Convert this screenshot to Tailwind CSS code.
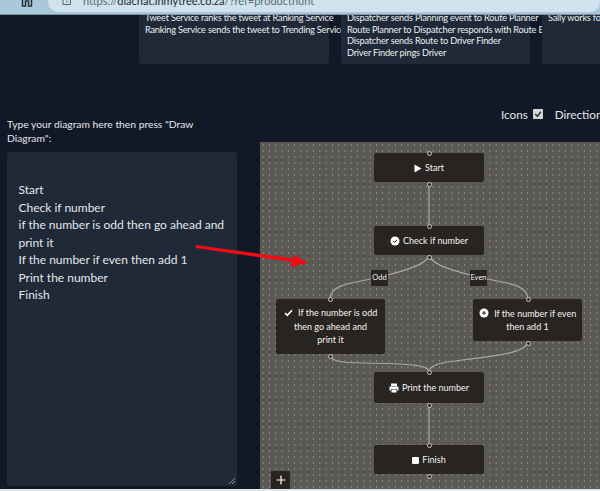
<!DOCTYPE html>
<html><head><meta charset="utf-8"><script src="https://cdn.jsdelivr.net/npm/@tailwindcss/browser@4"></script></head>
<body class="m-0 bg-[#111827]">
<div class="relative w-[600px] h-[491px] overflow-hidden flex flex-col bg-[#111827] text-[#e5e7eb] font-['Lato','Roboto',sans-serif] text-[12px]">
  <div class="h-[15px] shrink-0 bg-[#a9c8da] relative border-b border-[#7f929e]">
    <svg class="absolute left-[21px] top-0" width="12" height="7" viewBox="0 0 12 7" fill="none" stroke="#26323a" stroke-width="1.5"><path d="M1.5 0V6H4.5V1H7.5V6H10.500V0"/></svg>
    <div class="absolute left-[48px] top-[-10px] w-[552px] h-[22px] bg-[#cfe2ee] rounded-[10px]"></div>
    <div class="absolute left-[62px] top-0 flex items-start">
      <svg class="mt-[-2px]" width="10" height="8" viewBox="0 0 10 8" fill="none" stroke="#55636d"><path d="M1 0V6.500H8.500V0M5 2.500V4.500"/></svg>
      <span class="ml-[11px] mt-[-6px] text-[11px] leading-[14px] text-[#5c6a73] whitespace-nowrap">https://<span class="text-[#1c262d]">diachat.inmytree.co.za</span>/?ref=producthunt</span>
    </div>
  </div>
  <div class="h-[49px] shrink-0 flex gap-[12px] pl-[139px] overflow-hidden leading-[11.7px] text-[9.200px] tracking-[-0.2px] text-[#eceef1] whitespace-nowrap">
    <div class="w-[190px] shrink-0 h-[49px] bg-[#1f2937] rounded-b-[3px] pl-[6px] relative">
      <div class="-mt-[3px]"><div>Tweet Service ranks the tweet at Ranking Service</div><div>Ranking Service sends the tweet to Trending Service</div></div>
    </div>
    <div class="w-[189px] shrink-0 h-[49px] bg-[#1f2937] rounded-b-[3px] pl-[6px] relative">
      <div class="-mt-[3px]"><div>Dispatcher sends Planning event to Route Planner</div><div>Route Planner to Dispatcher responds with Route Engine</div><div>Dispatcher sends Route to Driver Finder</div><div>Driver Finder pings Driver</div></div>
    </div>
    <div class="w-[190px] shrink-0 h-[49px] bg-[#1f2937] rounded-b-[3px] pl-[6px] relative">
      <div class="-mt-[3px]"><div>Sally works for a big company</div></div>
    </div>
  </div>
  <div class="h-[78px] shrink-0 relative">
    <div class="absolute left-[501px] top-[42px] flex items-center whitespace-nowrap text-[11.700px] leading-[16px] text-[#e5e7eb]">
      <span>Icons</span>
      <span class="ml-[5px] w-[10px] h-[10px] bg-[#d6d6d6] rounded-[1px] flex items-center justify-center"><svg width="8" height="8" viewBox="0 0 7 7" fill="none" stroke="#333" stroke-width="1.3"><path d="M1 3.500L3 5.500L6 1.500"/></svg></span>
      <span class="ml-[12px]">Direction</span>
    </div>
    <div class="absolute left-[7px] top-[52.500px] w-[195px] text-[10.300px] leading-[14.500px] text-[#e5e7eb]">Type your diagram here then press "Draw Diagram":</div>
  </div>
  <div class="flex-1 flex min-h-0 relative pb-[2px]">
    <div class="w-[260px] shrink-0 pl-[7px] pt-[10px] pb-[3px]">
      <div class="w-[230px] h-full bg-[#1f2937] rounded-[3px] pl-[11.500px] pr-[10px] pt-[29px] text-[12px] leading-[17.500px] text-[#e5e7eb] relative">
        <div>Start</div><div>Check if number</div><div>if the number is odd then go ahead and print it</div><div>If the number if even then add 1</div><div>Print the number</div><div>Finish</div>
        <svg class="absolute right-[1px] bottom-[1px]" width="8" height="8" viewBox="0 0 8 8" stroke="#8a9099"><path d="M1 7L7 1M4 7L7 4"/></svg>
      </div>
    </div>
    <div class="relative flex-1 h-[347px] bg-[#5b5953] bg-[radial-gradient(#8f8d86_0.6px,transparent_0.8px)] bg-size-[6.300px_6px] text-[9px] text-[#f3f3f3]">
      <svg class="absolute inset-0" width="340" height="347" fill="none" stroke="#a9a8a2" stroke-width="1.2">
        <path d="M169 40V84"/>
        <path d="M169 113C167 122 150 127 128 133C100 141 70 140 70 157"/>
        <path d="M169 113C171 122 188 127 210 133C238 141 268 140 268 157"/>
        <path d="M70 213C70 224 110 220 140 222C160 223 169 225 169 230"/>
        <path d="M268 199C268 213 220 215 195 219C178 221 169 224 169 230"/>
        <path d="M169 261V303"/>
      </svg>
      <div class="absolute left-[114px] top-[11px] w-[110px] h-[29px] pt-[1px] bg-[#282422] rounded-[2px] flex items-center justify-center gap-[3px]"><svg width="8" height="9" viewBox="0 0 8 9" fill="#fff"><path d="M0.500 0.500L7.500 4.500L0.500 8.500Z"/></svg><span>Start</span></div>
      <div class="absolute left-[114px] top-[84px] w-[110px] h-[29px] pt-[1px] bg-[#282422] rounded-[2px] flex items-center justify-center gap-[3px]"><svg width="10" height="10" viewBox="0 0 10 10"><circle cx="5" cy="5" r="4.500" fill="#fff"/><path d="M3 5L4.500 6.200L7 4" fill="none" stroke="#282422"/></svg><span>Check if number</span></div>
      <div class="absolute left-[16px] top-[157px] w-[109px] h-[55px] bg-[#282422] rounded-[2px] flex items-center justify-center text-center leading-[13.500px]"><div><svg class="inline mr-[3px] align-[-1px]" width="9" height="8" viewBox="0 0 9 8" fill="none" stroke="#fff" stroke-width="1.600"><path d="M1 4L3.300 6.300L8 1.200"/></svg> If the number is odd<br>then go ahead and<br>print it</div></div>
      <div class="absolute left-[213px] top-[157px] w-[109px] h-[42px] bg-[#282422] rounded-[2px] flex items-center justify-center text-center leading-[13.500px]"><div><svg class="inline mr-[3px] align-[-1.500px]" width="10" height="10" viewBox="0 0 10 10"><circle cx="5" cy="5" r="4.500" fill="#fff"/><path d="M5 3V7M3 5H7" stroke="#282422"/></svg> If the number if even<br>then add 1</div></div>
      <div class="absolute left-[114px] top-[230px] w-[110px] h-[31px] bg-[#282422] rounded-[2px] flex items-center justify-center gap-[3px]"><svg width="10" height="10" viewBox="0 0 10 10" fill="#fff"><path d="M2 0.500H8V3H2ZM0.500 3.500H9.500V7.500H8V6H2V7.500H0.500ZM2.500 6.500H7.500V9.500H2.500Z"/></svg><span>Print the number</span></div>
      <div class="absolute left-[114px] top-[303px] w-[110px] h-[29px] pt-[1px] bg-[#282422] rounded-[2px] flex items-center justify-center gap-[3px]"><span class="w-[7px] h-[7px] bg-white rounded-[1px]"></span><span>Finish</span></div>
      <div class="absolute left-[111px] top-[128px] w-[17px] h-[16px] bg-[#282422] text-[7.500px] flex items-center justify-center">Odd</div>
      <div class="absolute left-[210px] top-[128px] w-[17px] h-[16px] bg-[#282422] text-[7.500px] flex items-center justify-center">Even</div>
      <span class="absolute left-[167px] top-[9px] w-[3px] h-[3px] rounded-full bg-[#282422] border border-[#c9c8c4] box-content"></span>
      <span class="absolute left-[167px] top-[40px] w-[3px] h-[3px] rounded-full bg-[#282422] border border-[#c9c8c4] box-content"></span>
      <span class="absolute left-[167px] top-[82px] w-[3px] h-[3px] rounded-full bg-[#282422] border border-[#c9c8c4] box-content"></span>
      <span class="absolute left-[167px] top-[113px] w-[3px] h-[3px] rounded-full bg-[#282422] border border-[#c9c8c4] box-content"></span>
      <span class="absolute left-[68px] top-[155px] w-[3px] h-[3px] rounded-full bg-[#282422] border border-[#c9c8c4] box-content"></span>
      <span class="absolute left-[68px] top-[212px] w-[3px] h-[3px] rounded-full bg-[#282422] border border-[#c9c8c4] box-content"></span>
      <span class="absolute left-[266px] top-[155px] w-[3px] h-[3px] rounded-full bg-[#282422] border border-[#c9c8c4] box-content"></span>
      <span class="absolute left-[266px] top-[199px] w-[3px] h-[3px] rounded-full bg-[#282422] border border-[#c9c8c4] box-content"></span>
      <span class="absolute left-[167px] top-[228px] w-[3px] h-[3px] rounded-full bg-[#282422] border border-[#c9c8c4] box-content"></span>
      <span class="absolute left-[167px] top-[261px] w-[3px] h-[3px] rounded-full bg-[#282422] border border-[#c9c8c4] box-content"></span>
      <span class="absolute left-[167px] top-[301px] w-[3px] h-[3px] rounded-full bg-[#282422] border border-[#c9c8c4] box-content"></span>
      <span class="absolute left-[167px] top-[332px] w-[3px] h-[3px] rounded-full bg-[#282422] border border-[#c9c8c4] box-content"></span>
      <div class="absolute left-[11px] top-[329px] w-[19px] h-[18px] bg-[#282422] flex items-center justify-center"><svg width="10" height="10" viewBox="0 0 10 10" stroke="#fff" stroke-width="1.200"><path d="M5 0.500V9.500M0.500 5H9.500"/></svg></div>
    </div>
  </div>
  <div class="h-[2px] absolute bottom-0 left-0 right-0 bg-[#e3e6ea]"></div>
  <svg class="absolute left-0 top-0" width="600" height="491" fill="#f40a12"><path d="M196 245L294 258.500L293 254.500L308 263L290 267L292.500 262L195.500 248Z"/></svg>
</div>
</body></html>
